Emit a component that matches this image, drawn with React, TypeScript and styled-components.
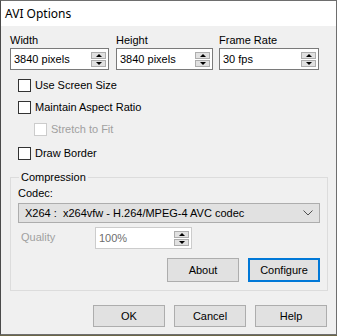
import React from 'react'
import styled, { createGlobalStyle } from 'styled-components'

const Global = createGlobalStyle`
  html, body {
    margin: 0;
    padding: 0;
    background: #6b6646;
  }
  body {
    font-family: 'Liberation Sans', Arial, sans-serif;
    font-size: 11px;
    color: #000;
  }
`

const Window = styled.div`
  width: 335px;
  height: 333px;
  border: 1px solid #6e6e6e;
  border-left-color: #4a4a4a;
  background: #f0f0f0;
  display: flex;
  flex-direction: column;
  overflow: hidden;
`

const TitleBar = styled.div`
  height: 25px;
  background: #fff;
  display: flex;
  align-items: center;
  padding-left: 4px;
  font-family: 'Noto Sans', 'Open Sans', sans-serif;
  font-size: 12px;
  color: #000;
`

const Body = styled.div`
  flex: 1;
  padding: 0 9px 0 9px;
  display: flex;
  flex-direction: column;
`

const FieldRow = styled.div`
  display: flex;
  margin-top: 8px;
`

const Field = styled.div<{ $w: number; $gap: number }>`
  width: ${(p) => p.$w}px;
  margin-right: ${(p) => p.$gap}px;
  display: flex;
  flex-direction: column;
`

const Label = styled.label<{ $disabled?: boolean }>`
  font-size: 11px;
  line-height: 13px;
  color: ${(p) => (p.$disabled ? '#a0a0a0' : '#000')};
  white-space: nowrap;
`

const SpinBox = styled.div<{ $w?: number; $disabled?: boolean }>`
  box-sizing: border-box;
  width: ${(p) => (p.$w ? `${p.$w}px` : '100%')};
  height: 22px;
  border: 1px solid ${(p) => (p.$disabled ? '#cccccc' : '#7a7a7a')};
  background: #fff;
  display: flex;
  align-items: center;
  padding: 0 2px 0 3px;
  margin-top: 1px;
  color: ${(p) => (p.$disabled ? '#6d6d6d' : '#000')};
`

const SpinText = styled.span`
  flex: 1;
  white-space: nowrap;
`

const SpinButtons = styled.div`
  width: 15px;
  display: flex;
  flex-direction: column;
  gap: 1px;
`

const SpinBtn = styled.div`
  height: 7px;
  box-sizing: border-box;
  border: 1px solid #adadad;
  background: #e1e1e1;
  display: flex;
  align-items: center;
  justify-content: center;
`

const Arrow = styled.div<{ $down?: boolean }>`
  width: 0;
  height: 0;
  border-left: 3px solid transparent;
  border-right: 3px solid transparent;
  ${(p) =>
    p.$down ? 'border-top: 3px solid #000;' : 'border-bottom: 3px solid #000;'}
`

const CheckRow = styled.div<{ $indent?: number; $top: number }>`
  display: flex;
  align-items: center;
  margin-left: ${(p) => 8 + (p.$indent || 0)}px;
  margin-top: ${(p) => p.$top}px;
  height: 13px;
`

const CheckBox = styled.span<{ $disabled?: boolean }>`
  width: 13px;
  height: 13px;
  box-sizing: border-box;
  border: 1px solid ${(p) => (p.$disabled ? '#cccccc' : '#333333')};
  background: #fff;
  margin-right: 4px;
`

const Group = styled.fieldset`
  margin: 11px 0 0 0;
  padding: 0 7px 8px 7px;
  width: 318px;
  box-sizing: border-box;
  border: 1px solid #dcdcdc;
  display: flex;
  flex-direction: column;
`

const Legend = styled.legend`
  padding: 0 2px;
  margin-left: 1px;
  font-size: 11px;
  line-height: 13px;
`

const CodecLabel = styled(Label)`
  margin-top: 3px;
`

const Combo = styled.div`
  margin-top: 3px;
  height: 20px;
  box-sizing: border-box;
  border: 1px solid #adadad;
  background: #e1e1e1;
  display: flex;
  align-items: center;
  padding: 0 6px 0 6px;
`

const ComboText = styled.span`
  flex: 1;
  white-space: nowrap;
`

const QualityRow = styled.div`
  display: flex;
  align-items: center;
  margin-top: 3px;
`

const QualityLabel = styled(Label)`
  width: 74px;
  margin-left: 3px;
`

const ButtonRow = styled.div<{ $top: number; $gap: number }>`
  display: flex;
  justify-content: flex-end;
  gap: ${(p) => p.$gap}px;
  margin-top: ${(p) => p.$top}px;
`

const Button = styled.button<{ $focused?: boolean; $h: number }>`
  width: 72px;
  height: ${(p) => p.$h}px;
  box-sizing: border-box;
  font-family: 'Liberation Sans', Arial, sans-serif;
  font-size: 11px;
  color: #000;
  background: #e1e1e1;
  border: ${(p) => (p.$focused ? '2px solid #0078d7' : '1px solid #adadad')};
  padding: 0;
`

const Spin = ({ value, w, disabled }: { value: string; w?: number; disabled?: boolean }) => (
  <SpinBox $w={w} $disabled={disabled}>
    <SpinText>{value}</SpinText>
    <SpinButtons>
      <SpinBtn>
        <Arrow />
      </SpinBtn>
      <SpinBtn>
        <Arrow $down />
      </SpinBtn>
    </SpinButtons>
  </SpinBox>
)

const Check = ({
  label,
  top,
  indent,
  disabled,
}: {
  label: string
  top: number
  indent?: number
  disabled?: boolean
}) => (
  <CheckRow $top={top} $indent={indent}>
    <CheckBox $disabled={disabled} />
    <Label $disabled={disabled}>{label}</Label>
  </CheckRow>
)

export default function App() {
  return (
    <>
      <Global />
      <Window>
        <TitleBar>AVI Options</TitleBar>
        <Body>
          <FieldRow>
            <Field $w={99} $gap={7}>
              <Label>Width</Label>
              <Spin value="3840 pixels" />
            </Field>
            <Field $w={97} $gap={6}>
              <Label>Height</Label>
              <Spin value="3840 pixels" />
            </Field>
            <Field $w={100} $gap={0}>
              <Label>Frame Rate</Label>
              <Spin value="30 fps" />
            </Field>
          </FieldRow>
          <Check label="Use Screen Size" top={9} />
          <Check label="Maintain Aspect Ratio" top={9} />
          <Check label="Stretch to Fit" top={9} indent={16} disabled />
          <Check label="Draw Border" top={11} />
          <Group>
            <Legend>Compression</Legend>
            <CodecLabel>Codec:</CodecLabel>
            <Combo>
              <ComboText>X264 :&nbsp; x264vfw - H.264/MPEG-4 AVC codec</ComboText>
              <svg width="10" height="6" viewBox="0 0 10 6">
                <path d="M0.5 0.5 L5 5 L9.5 0.5" fill="none" stroke="#505050" strokeWidth="1" />
              </svg>
            </Combo>
            <QualityRow>
              <QualityLabel $disabled>Quality</QualityLabel>
              <Spin value="100%" w={97} disabled />
            </QualityRow>
            <ButtonRow $top={9} $gap={9}>
              <Button $h={24}>About</Button>
              <Button $h={24} $focused>
                Configure
              </Button>
            </ButtonRow>
          </Group>
          <ButtonRow $top={14} $gap={9}>
            <Button $h={22}>OK</Button>
            <Button $h={22}>Cancel</Button>
            <Button $h={22}>Help</Button>
          </ButtonRow>
        </Body>
      </Window>
    </>
  )
}
